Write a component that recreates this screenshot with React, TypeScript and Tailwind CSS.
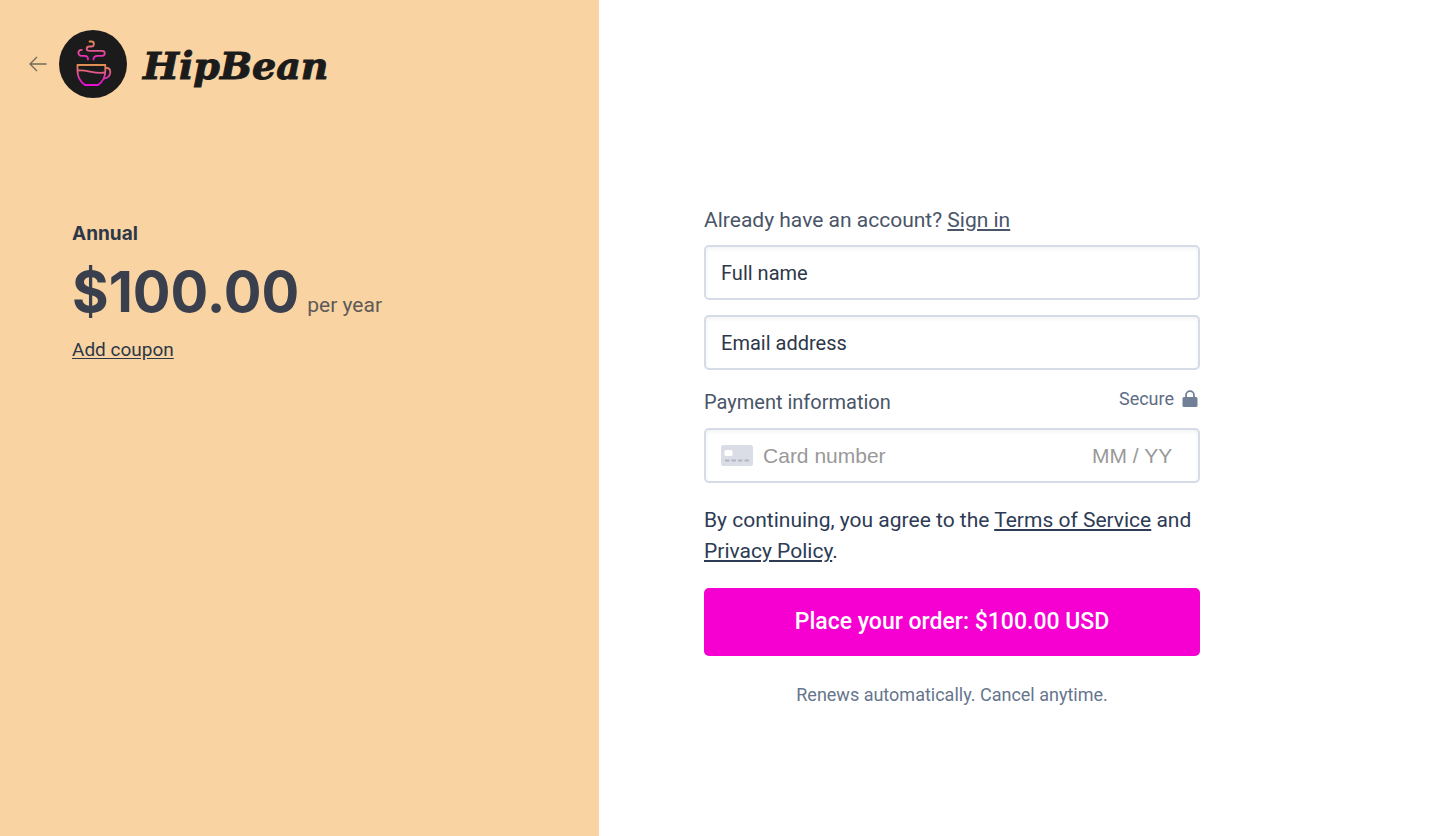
import type { ComponentProps } from "react";

function BackArrow() {
    return (
        <svg width="18" height="16" viewBox="0 0 18 16" fill="none" stroke="#75695a" strokeWidth="1.3">
            <path d="M17.5 8H1M8 1 1 8l7 7" />
        </svg>
    );
}

function CupLogo() {
    return (
        <svg width="68" height="68" viewBox="0 0 68 68" fill="none">
            <defs>
                <linearGradient id="cup" x1="0" y1="35" x2="0" y2="52" gradientUnits="userSpaceOnUse">
                    <stop stopColor="#e09050" />
                    <stop offset="1" stopColor="#e80fd2" />
                </linearGradient>
                <linearGradient id="steam" x1="0" y1="11" x2="0" y2="29" gradientUnits="userSpaceOnUse">
                    <stop stopColor="#e0904f" />
                    <stop offset="1" stopColor="#e522c6" />
                </linearGradient>
            </defs>
            <circle cx="34" cy="34" r="34" fill="#1b1b1c" />
            <g stroke="url(#cup)" strokeWidth="1.8" strokeLinejoin="round">
                <path d="M18.500 35h27.800v6c0 6-2.300 10.500-7.300 14H26c-5-3.500-7.500-8-7.500-14z" />
                <path d="M18.500 40.500c9-1.500 17 4 27.500 2" />
                <path d="M46.300 38h1.200c2.300 0 3.800 1.800 3.800 4.200 0 3.600-2.700 6.300-6.300 6.300" />
            </g>
            <g stroke="url(#steam)" strokeWidth="1.8" strokeLinecap="round">
                <path d="M29 29.500v-.5c0-2-1.200-3.200-3.500-3.200h-3c-4.200 0-4.200-6 .3-6" />
                <path d="M34.500 29.500c0-2.500 1.300-3.700 4-3.700H43c3.700 0 3.700-5 0-5H30.500c-3.700 0-3.700-4.300 0-4.300h2c3.200 0 3.200-5 0-5h-2" />
            </g>
        </svg>
    );
}

function Lock() {
    return (
        <svg width="16" height="18" viewBox="0 0 16 18">
            <path d="M4 8V5.200a4 4 0 0 1 8 0V8" fill="none" stroke="#718096" strokeWidth="1.800" />
            <rect x="0.500" y="7" width="15" height="10" rx="1.500" fill="#718096" />
        </svg>
    );
}

function CardIcon() {
    return (
        <svg width="32" height="21" viewBox="0 0 32 21" className="shrink-0">
            <rect width="32" height="21" rx="2.500" fill="#dadde5" />
            <rect x="3.500" y="5" width="8" height="6" rx="1.500" fill="#fff" />
            <path d="M4 15.500h4.500M10.500 15.500h4.500M17 15.500h4.500M23.500 15.500h4.500" stroke="#b1b5c2" strokeWidth="1.800" />
        </svg>
    );
}

const box = "h-[55px] w-full rounded-[5px] border-2 border-[#d5dce8] bg-white shadow-[inset_0_2px_4px_rgba(0,0,0,0.05)]";

function TextField(props: ComponentProps<"input">) {
    return (
        <input
            aria-label={props.placeholder}
            className={`${box} px-[15px] text-xl text-[#2d3748] placeholder:text-[#2d3748] outline-none focus:border-[#718096]`}
            {...props}
        />
    );
}

export default function App() {
    return (
        <div className="flex min-h-screen bg-white font-['Roboto',sans-serif]">
            <aside className="w-[41.6%] shrink-0 bg-[#f9d3a1] text-[#2d3748]">
                <header className="flex items-center pt-[30px] pl-[29px]">
                    <a href="#" aria-label="Back" className="mr-3"><BackArrow /></a>
                    <a href="#" className="flex items-center gap-4 text-[#1b1b1c]">
                        <CupLogo />
                        <span className="pt-1 font-['DejaVu_Serif',serif] text-[38px] leading-10 font-bold italic [-webkit-text-stroke:1px_#1b1b1c]">HipBean</span>
                    </a>
                </header>
                <section className="px-[72px] pt-[121px]">
                    <h1 className="font-['Inter',sans-serif] text-[19px] leading-[30px] font-bold">Annual</h1>
                    <p className="flex items-baseline gap-2">
                        <span className="font-['Inter',sans-serif] text-[56px] leading-[86px] font-bold text-[#393f4d]">$100.00</span>
                        <span className="text-[21px] leading-[30px] text-[#5d5a59]">per year</span>
                    </p>
                    <a href="#" className="block w-fit text-[19px] leading-[30px] underline underline-offset-2">Add coupon</a>
                </section>
            </aside>

            <main className="flex-1 pt-[205px] pr-8 pl-[105px]">
                <form className="max-w-[496px]" onSubmit={(e) => e.preventDefault()}>
                    <p className="text-[21px] leading-[30px] text-[#4a5568]">
                        Already have an account? <a href="#" className="underline underline-offset-2">Sign in</a>
                    </p>
                    <div className="mt-[10px] flex flex-col gap-[15px]">
                        <TextField type="text" name="name" placeholder="Full name" />
                        <TextField type="email" name="email" placeholder="Email address" />
                    </div>

                    <div className="mt-4 flex items-start justify-between">
                        <h2 className="pt-[1px] text-xl leading-[30px] text-[#4a5568]">Payment information</h2>
                        <span className="flex items-center gap-2 pr-[2px] text-lg leading-[26px] text-[#5e6c84]">
                            Secure <Lock />
                        </span>
                    </div>
                    <div className={`${box} mt-[11px] flex items-center px-[15px] font-['Liberation_Sans',sans-serif] text-[21px]`}>
                        <CardIcon />
                        <input type="text" name="card" aria-label="Card number" placeholder="Card number" className="ml-[10px] min-w-0 flex-1 outline-none placeholder:text-[#999]" />
                        <input type="text" name="expiry" aria-label="Expiry date" placeholder="MM / YY" className="w-[91px] outline-none placeholder:text-[#999]" />
                    </div>

                    <p className="mt-[22px] text-[21px] leading-[31px] text-[#2d3b55]">
                        By continuing, you agree to the <a href="#" className="underline underline-offset-2">Terms of Service</a> and{" "}
                        <a href="#" className="underline underline-offset-2">Privacy Policy</a>.
                    </p>
                    <button type="submit" className="mt-[21px] h-[68px] w-full rounded-[5px] bg-[#f600d2] text-[23px] font-medium text-white">
                        Place your order: $100.00 USD
                    </button>
                    <p className="mt-6 text-center text-lg leading-[30px] text-[#66758c]">Renews automatically. Cancel anytime.</p>
                </form>
            </main>
        </div>
    );
}
